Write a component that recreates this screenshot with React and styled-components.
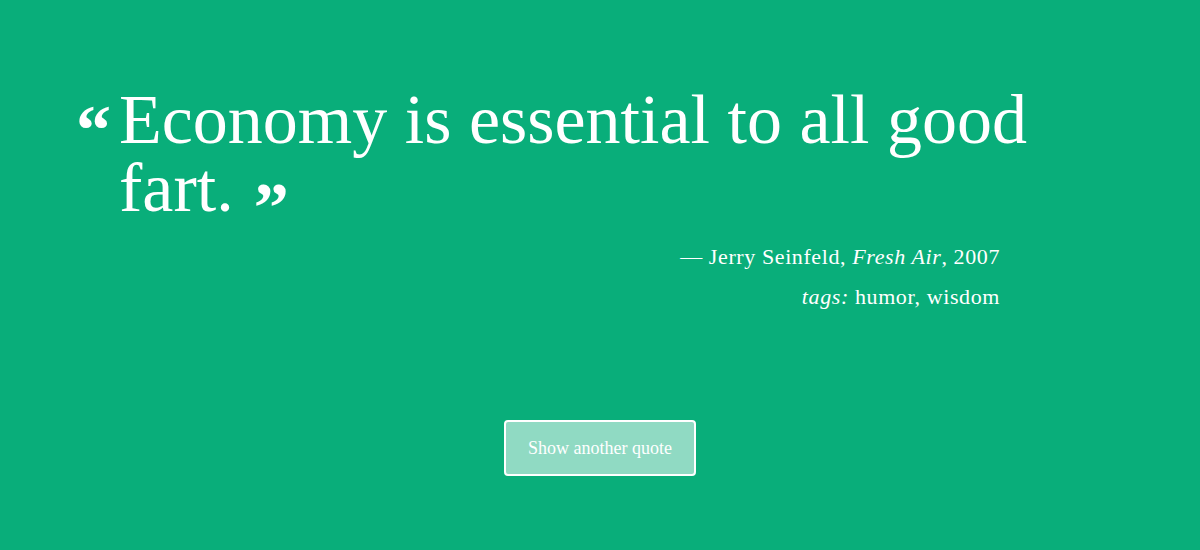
import React from 'react';
import styled, { createGlobalStyle } from 'styled-components';

const GlobalStyle = createGlobalStyle`
  html, body {
    margin: 0;
    padding: 0;
    background: #09ae7a;
  }
`;

export default function App() {
  return (
    <Page>
      <GlobalStyle />
      <Card>
        <Quote>
          <Mark>“</Mark>
          <Text>
            Economy is essential to all good fart.<Mark $close>”</Mark>
          </Text>
        </Quote>
        <Meta>
          — Jerry Seinfeld, <em>Fresh Air</em>, 2007
        </Meta>
        <Meta>
          <em>tags:</em> humor, wisdom
        </Meta>
      </Card>
      <Footer>
        <Button>Show another quote</Button>
      </Footer>
    </Page>
  );
}

const Page = styled.div`
  width: 1200px;
  height: 550px;
  background: #09ae7a;
  color: #fff;
  font-family: "Liberation Serif", "Times New Roman", serif;
  display: flex;
  flex-direction: column;
  padding-top: 86px;
  box-sizing: border-box;
`;

const Card = styled.div`
  width: 924px;
  margin-left: 76px;
  display: flex;
  flex-direction: column;
`;

const Quote = styled.div`
  display: flex;
  align-items: flex-start;
  margin-bottom: 15px;
`;

const Mark = styled.span`
  font-size: 70px;
  line-height: 40px;
  font-weight: bold;
  margin-right: ${p => (p.$close ? '0' : '8px')};
  margin-left: ${p => (p.$close ? '20px' : '0')};
  display: inline-block;
  position: relative;
  top: ${p => (p.$close ? '20px' : '24px')};
`;

const Text = styled.div`
  width: 940px;
  flex-shrink: 0;
  font-size: 70px;
  line-height: 68px;
`;

const Meta = styled.div`
  text-align: right;
  font-size: 22px;
  line-height: 40px;
  letter-spacing: 0.6px;
`;

const Footer = styled.div`
  margin-top: auto;
  margin-bottom: 74px;
  display: flex;
  justify-content: center;
`;

const Button = styled.button`
  width: 192px;
  height: 56px;
  background: rgba(255, 255, 255, 0.55);
  border: 2px solid #fff;
  border-radius: 4px;
  color: #fff;
  font-family: "Liberation Serif", "Times New Roman", serif;
  font-size: 18px;
  cursor: pointer;
`;
